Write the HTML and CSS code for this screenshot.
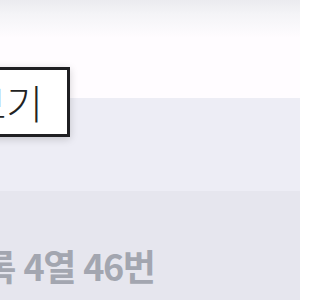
FILE: index.html
```html
<!DOCTYPE html>
<html lang="ko">
<head>
<meta charset="utf-8">
<link rel="stylesheet" href="styles.css">
</head>
<body>
<div class="page">
  <div class="top"></div>
  <div class="band"></div>
  <div class="seat">
    <div class="seat-text">A블록 4열 46번</div>
  </div>
  <div class="tip">좌석 보기</div>
</div>
</body>
</html>
```
FILE: styles.css
```css
html, body {
  margin: 0;
  padding: 0;
}
body {
  width: 300px;
  height: 300px;
  overflow: hidden;
  font-family: "Noto Sans CJK KR", "Noto Sans", sans-serif;
}
.page {
  position: relative;
  width: 300px;
  height: 300px;
  display: flex;
  flex-direction: column;
  overflow: hidden;
}
.top {
  height: 98px;
  flex: none;
  background: linear-gradient(to bottom, #ebebef 0px, #f4f4f7 14px, #fffcff 38px, #fffcff 100%);
}
.band {
  height: 93px;
  flex: none;
  background: #ededf5;
}
.seat {
  flex: 1;
  background: #e6e6ee;
  padding-top: 52px;
}
.seat-text {
  margin-left: -70px;
  font-size: 36px;
  font-weight: 700;
  color: #a3a6b0;
  line-height: 44px;
  white-space: nowrap;
  letter-spacing: -1.5px;
}
.tip {
  position: absolute;
  top: 67px;
  right: 230px;
  height: 70px;
  box-sizing: border-box;
  display: flex;
  align-items: center;
  padding: 0 24px 0 30px;
  background: #fff;
  border: 3px solid #1f1f22;
  box-shadow: 0 2px 8px rgba(0, 0, 0, 0.18);
  font-size: 40px;
  font-weight: 300;
  color: #222;
  white-space: nowrap;
}
```
